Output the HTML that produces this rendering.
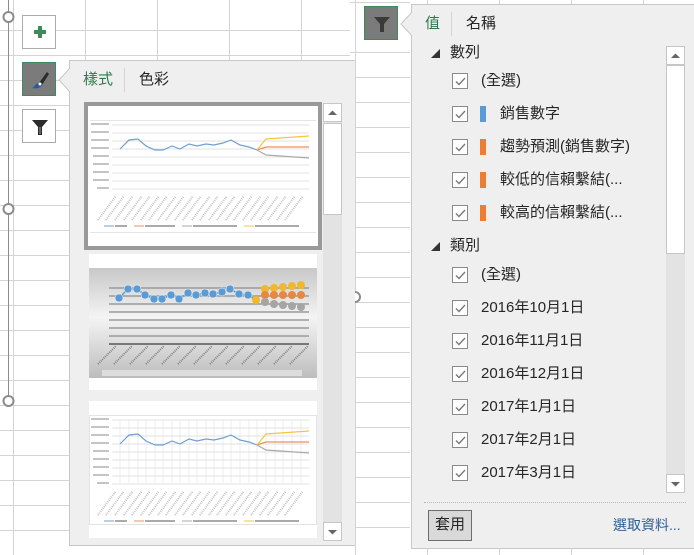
<!DOCTYPE html>
<html><head><meta charset="utf-8"><style>
*{margin:0;padding:0;box-sizing:border-box}
body{width:694px;height:555px;position:relative;overflow:hidden;background:#fff;font-family:"Liberation Sans","Noto Sans CJK TC",sans-serif;color:#262626}
.a{position:absolute}
.btn{position:absolute;width:34px;height:34px;border:1px solid #ababab;background:#fff}
.t{position:absolute;font-size:15px;line-height:16px;white-space:nowrap}
.cb{position:absolute;width:16px;height:16px;border:1px solid #8a8a8a;background:#fdfdfd}
.cb svg{position:absolute;left:2px;top:3px}
.bar{position:absolute;width:6px;height:16px}
</style></head><body>
<svg class="a" style="left:0;top:0" width="694" height="555">
 <g stroke="#d4d4d4" stroke-width="1">
  <line x1="13.5" y1="0" x2="13.5" y2="555"/><line x1="85.5" y1="0" x2="85.5" y2="60"/><line x1="157.5" y1="0" x2="157.5" y2="60"/><line x1="229.5" y1="0" x2="229.5" y2="60"/><line x1="301.5" y1="0" x2="301.5" y2="60"/>
  <line x1="0" y1="30.5" x2="350" y2="30.5"/><line x1="0" y1="55.5" x2="350" y2="55.5"/>
  <line x1="0" y1="80.5" x2="70" y2="80.5"/><line x1="0" y1="105.5" x2="70" y2="105.5"/><line x1="0" y1="130.5" x2="70" y2="130.5"/><line x1="0" y1="155.5" x2="70" y2="155.5"/><line x1="0" y1="180.5" x2="70" y2="180.5"/><line x1="0" y1="205.5" x2="70" y2="205.5"/><line x1="0" y1="230.5" x2="70" y2="230.5"/><line x1="0" y1="255.5" x2="70" y2="255.5"/><line x1="0" y1="280.5" x2="70" y2="280.5"/><line x1="0" y1="305.5" x2="70" y2="305.5"/><line x1="0" y1="330.5" x2="70" y2="330.5"/><line x1="0" y1="355.5" x2="70" y2="355.5"/><line x1="0" y1="380.5" x2="70" y2="380.5"/><line x1="0" y1="405.5" x2="70" y2="405.5"/><line x1="0" y1="430.5" x2="70" y2="430.5"/><line x1="0" y1="455.5" x2="70" y2="455.5"/><line x1="0" y1="480.5" x2="70" y2="480.5"/><line x1="0" y1="505.5" x2="70" y2="505.5"/><line x1="0" y1="530.5" x2="70" y2="530.5"/>
  <line x1="355.5" y1="0" x2="355.5" y2="555"/><line x1="427.5" y1="0" x2="427.5" y2="5"/><line x1="499.5" y1="0" x2="499.5" y2="5"/><line x1="571.5" y1="0" x2="571.5" y2="5"/><line x1="643.5" y1="0" x2="643.5" y2="5"/>
  <line x1="427.5" y1="548" x2="427.5" y2="555"/><line x1="499.5" y1="548" x2="499.5" y2="555"/><line x1="571.5" y1="548" x2="571.5" y2="555"/><line x1="643.5" y1="548" x2="643.5" y2="555"/>
  <line x1="350" y1="2.5" x2="410" y2="2.5"/><line x1="350" y1="52.5" x2="410" y2="52.5"/><line x1="350" y1="77.5" x2="410" y2="77.5"/><line x1="350" y1="102.5" x2="410" y2="102.5"/><line x1="350" y1="127.5" x2="410" y2="127.5"/><line x1="350" y1="152.5" x2="410" y2="152.5"/><line x1="350" y1="177.5" x2="410" y2="177.5"/><line x1="350" y1="202.5" x2="410" y2="202.5"/><line x1="350" y1="227.5" x2="410" y2="227.5"/><line x1="350" y1="252.5" x2="410" y2="252.5"/><line x1="350" y1="277.5" x2="410" y2="277.5"/><line x1="350" y1="302.5" x2="410" y2="302.5"/><line x1="350" y1="327.5" x2="410" y2="327.5"/><line x1="350" y1="352.5" x2="410" y2="352.5"/><line x1="350" y1="377.5" x2="410" y2="377.5"/><line x1="350" y1="402.5" x2="410" y2="402.5"/><line x1="350" y1="427.5" x2="410" y2="427.5"/><line x1="350" y1="452.5" x2="410" y2="452.5"/><line x1="350" y1="477.5" x2="410" y2="477.5"/><line x1="350" y1="502.5" x2="410" y2="502.5"/><line x1="350" y1="527.5" x2="410" y2="527.5"/>
 </g>
 <line x1="8.5" y1="0" x2="8.5" y2="401" stroke="#8c8c8c"/>
 <g fill="#fff" stroke="#8c8c8c" stroke-width="2"><circle cx="8.5" cy="17" r="5"/><circle cx="8.5" cy="209" r="5"/><circle cx="8.5" cy="401" r="5"/><circle cx="355" cy="297" r="5"/></g>
</svg>

<div class="btn" style="left:22px;top:15px"><svg width="34" height="34"><path d="M11 16h12M17 10v12" stroke="#3f8a5a" stroke-width="4"/></svg></div>
<div class="btn" style="left:22px;top:62px;background:#7b7b7b;border-color:#3f8a5a"><svg width="34" height="34"><path d="M24 9 L16 20 L19 22 L26 11Z" fill="#2b2b2b"/><path d="M15 20 C12 21 12 24 9 25 C13 26 18 25 19 22Z" fill="#2a5aa0"/><circle cx="17" cy="21" r="1.5" fill="#fff"/></svg></div>
<div class="btn" style="left:22px;top:109px"><svg width="34" height="34"><path d="M9 10 H25 L19 17 V25 H15 V17 Z" fill="#2b2b2b"/><path d="M16 17 V24 H18 V17" fill="#666"/></svg></div>

<div class="a" style="left:69px;top:60px;width:286px;height:486px;background:#efefef;border:1px solid #c8c8c8;border-right:none"></div>
<svg class="a" style="left:58px;top:68px" width="13" height="24"><path d="M12 0 L1 12 L12 24" fill="#efefef" stroke="#c8c8c8"/></svg>
<div class="t" style="left:83px;top:72px;color:#2f7a4a">樣式</div>
<div class="a" style="left:124px;top:68px;width:1px;height:24px;background:#d4d4d4"></div>
<div class="t" style="left:139px;top:72px">色彩</div>

<svg class="a" style="left:84px;top:102px" width="240" height="440">
 <defs>
  <linearGradient id="g" x1="0" x2="0" y1="0" y2="1"><stop offset="0" stop-color="#c8c8c8"/><stop offset=".45" stop-color="#f4f4f4"/><stop offset="1" stop-color="#bdbdbd"/></linearGradient>
  <g id="ch">
   <g stroke="#e2e2e2"><line x1="28" y1="23" x2="225" y2="23"/><line x1="28" y1="31" x2="225" y2="31"/><line x1="28" y1="39" x2="225" y2="39"/><line x1="28" y1="47" x2="225" y2="47"/><line x1="28" y1="55" x2="225" y2="55"/><line x1="28" y1="63" x2="225" y2="63"/><line x1="28" y1="71" x2="225" y2="71"/><line x1="28" y1="79" x2="225" y2="79"/><line x1="28" y1="87" x2="225" y2="87"/></g>
   <g fill="#c4c4c4"><rect x="7" y="21" width="18" height="2"/><rect x="7" y="29" width="18" height="2"/><rect x="7" y="37" width="18" height="2"/><rect x="7" y="45" width="18" height="2"/><rect x="9" y="53" width="16" height="2"/><rect x="9" y="61" width="16" height="2"/><rect x="9" y="69" width="16" height="2"/><rect x="9" y="77" width="16" height="2"/><rect x="13" y="85" width="12" height="2"/></g>
   <polyline fill="none" stroke="#6f9fd3" stroke-width="1.2" points="36,47 45,38 54,37 62,44 71,48 79,48 88,44 96,47 105,42 113,44 122,42 130,43 139,41 147,38 156,43 165,45 173,48"/>
   <polyline fill="none" stroke="#e9905a" stroke-width="1.2" points="173,48 182,45 225,45"/>
   <polyline fill="none" stroke="#f5c542" stroke-width="1.2" points="173,48 182,37 225,34"/>
   <polyline fill="none" stroke="#aaa" stroke-width="1.2" points="173,48 182,53 225,56"/>
   <g stroke="#c4c4c4" stroke-width="2" stroke-dasharray="1 1">
    <line x1="14" y1="118" x2="32" y2="94"/><line x1="22" y1="118" x2="40" y2="94"/><line x1="31" y1="118" x2="49" y2="94"/><line x1="40" y1="118" x2="58" y2="94"/><line x1="48" y1="118" x2="66" y2="94"/><line x1="57" y1="118" x2="75" y2="94"/><line x1="65" y1="118" x2="83" y2="94"/><line x1="74" y1="118" x2="92" y2="94"/><line x1="82" y1="118" x2="100" y2="94"/><line x1="91" y1="118" x2="109" y2="94"/><line x1="99" y1="118" x2="117" y2="94"/><line x1="108" y1="118" x2="126" y2="94"/><line x1="116" y1="118" x2="134" y2="94"/><line x1="125" y1="118" x2="143" y2="94"/><line x1="133" y1="118" x2="151" y2="94"/><line x1="142" y1="118" x2="160" y2="94"/><line x1="150" y1="118" x2="168" y2="94"/><line x1="159" y1="118" x2="177" y2="94"/><line x1="167" y1="118" x2="185" y2="94"/><line x1="176" y1="118" x2="194" y2="94"/><line x1="184" y1="118" x2="202" y2="94"/><line x1="193" y1="118" x2="211" y2="94"/><line x1="201" y1="118" x2="219" y2="94"/>
   </g>
   <line x1="20" y1="124" x2="30" y2="124" stroke="#6f9fd3"/><rect x="31" y="123" width="12" height="2" fill="#aaa"/>
   <line x1="50" y1="124" x2="60" y2="124" stroke="#e9905a"/><rect x="61" y="123" width="30" height="2" fill="#aaa"/>
   <line x1="98" y1="124" x2="108" y2="124" stroke="#aaa"/><rect x="109" y="123" width="44" height="2" fill="#aaa"/>
   <line x1="160" y1="124" x2="170" y2="124" stroke="#f5c542"/><rect x="171" y="123" width="44" height="2" fill="#aaa"/>
  </g>
 </defs>
 <rect x="2" y="2" width="234" height="144" fill="#fff" stroke="#999" stroke-width="4"/>
 <line x1="6" y1="18.5" x2="232" y2="18.5" stroke="#e5e5e5"/>
 <line x1="6" y1="130.5" x2="232" y2="130.5" stroke="#e5e5e5"/>
 <use href="#ch" x="0" y="0"/>
 <rect x="5" y="152" width="228" height="136" fill="#fff"/>
 <rect x="5" y="166" width="228" height="110" fill="url(#g)"/>
 <g stroke="#9a9a9a" stroke-width="1.5"><line x1="25" y1="186" x2="225" y2="186"/><line x1="25" y1="194" x2="225" y2="194"/><line x1="25" y1="202" x2="225" y2="202"/><line x1="25" y1="210" x2="225" y2="210"/><line x1="25" y1="218" x2="225" y2="218"/><line x1="25" y1="226" x2="225" y2="226"/><line x1="25" y1="234" x2="225" y2="234"/></g>
 <line x1="25" y1="242" x2="225" y2="242" stroke="#777" stroke-width="2"/>
 <polyline fill="none" stroke="#5b9bd5" stroke-width="1.5" points="35,196 44,187 53,187 61,193 70,197 78,197 87,193 95,197 104,191 112,193 121,191 129,192 138,190 146,187 155,192 164,193 172,198"/>
 <g fill="#5b9bd5" stroke="#fff" stroke-width=".5"><circle cx="35" cy="196" r="4"/><circle cx="44" cy="187" r="4"/><circle cx="53" cy="187" r="4"/><circle cx="61" cy="193" r="4"/><circle cx="70" cy="197" r="4"/><circle cx="78" cy="197" r="4"/><circle cx="87" cy="193" r="4"/><circle cx="95" cy="197" r="4"/><circle cx="104" cy="191" r="4"/><circle cx="112" cy="193" r="4"/><circle cx="121" cy="191" r="4"/><circle cx="129" cy="192" r="4"/><circle cx="138" cy="190" r="4"/><circle cx="146" cy="187" r="4"/><circle cx="155" cy="192" r="4"/><circle cx="164" cy="193" r="4"/></g>
 <g fill="#f2b82c"><circle cx="172" cy="198" r="4"/><circle cx="181" cy="187" r="4"/><circle cx="190" cy="186" r="4"/><circle cx="199" cy="185" r="4"/><circle cx="208" cy="184" r="4"/><circle cx="217" cy="183" r="4"/></g>
 <g fill="#e6883f"><circle cx="181" cy="193" r="4"/><circle cx="190" cy="193" r="4"/><circle cx="199" cy="193" r="4"/><circle cx="208" cy="193" r="4"/><circle cx="217" cy="193" r="4"/></g>
 <g fill="#a5a5a5"><circle cx="181" cy="200" r="4"/><circle cx="190" cy="202" r="4"/><circle cx="199" cy="203" r="4"/><circle cx="208" cy="204" r="4"/><circle cx="217" cy="205" r="4"/></g>
 <g stroke="#888" stroke-width="2" stroke-dasharray="1 1"><line x1="14" y1="262" x2="32" y2="244"/><line x1="30" y1="262" x2="48" y2="244"/><line x1="46" y1="262" x2="64" y2="244"/><line x1="62" y1="262" x2="80" y2="244"/><line x1="78" y1="262" x2="96" y2="244"/><line x1="94" y1="262" x2="112" y2="244"/><line x1="110" y1="262" x2="128" y2="244"/><line x1="126" y1="262" x2="144" y2="244"/><line x1="142" y1="262" x2="160" y2="244"/><line x1="158" y1="262" x2="176" y2="244"/><line x1="174" y1="262" x2="192" y2="244"/><line x1="190" y1="262" x2="208" y2="244"/><line x1="206" y1="262" x2="224" y2="244"/></g>
 <rect x="18" y="268" width="200" height="6" fill="#ddd"/>
 <rect x="5" y="299" width="228" height="137" fill="#fff"/>
 <rect x="5.5" y="313.5" width="227" height="109" fill="#fff" stroke="#e3e3e3"/>
 <g stroke="#ececec"><line x1="36" y1="318" x2="36" y2="381"/><line x1="45" y1="318" x2="45" y2="381"/><line x1="54" y1="318" x2="54" y2="381"/><line x1="62" y1="318" x2="62" y2="381"/><line x1="71" y1="318" x2="71" y2="381"/><line x1="79" y1="318" x2="79" y2="381"/><line x1="88" y1="318" x2="88" y2="381"/><line x1="96" y1="318" x2="96" y2="381"/><line x1="105" y1="318" x2="105" y2="381"/><line x1="113" y1="318" x2="113" y2="381"/><line x1="122" y1="318" x2="122" y2="381"/><line x1="130" y1="318" x2="130" y2="381"/><line x1="139" y1="318" x2="139" y2="381"/><line x1="147" y1="318" x2="147" y2="381"/><line x1="156" y1="318" x2="156" y2="381"/><line x1="165" y1="318" x2="165" y2="381"/><line x1="173" y1="318" x2="173" y2="381"/><line x1="182" y1="318" x2="182" y2="381"/><line x1="191" y1="318" x2="191" y2="381"/><line x1="199" y1="318" x2="199" y2="381"/><line x1="208" y1="318" x2="208" y2="381"/><line x1="217" y1="318" x2="217" y2="381"/></g>
 <use href="#ch" x="0" y="295"/>
</svg>
<div class="a" style="left:323px;top:103px;width:19px;height:438px;background:#e3e3e3"></div>
<div class="a" style="left:323px;top:103px;width:19px;height:19px;background:#fff;border:1px solid #c6c6c6"><svg width="17" height="17"><path d="M4 11 L8.5 6.5 L13 11Z" fill="#666"/></svg></div>
<div class="a" style="left:323px;top:123px;width:19px;height:92px;background:#fff;border:1px solid #c6c6c6"></div>
<div class="a" style="left:323px;top:522px;width:19px;height:19px;background:#fff;border:1px solid #c6c6c6"><svg width="17" height="17"><path d="M4 7 L8.5 11.5 L13 7Z" fill="#666"/></svg></div>

<div class="btn" style="left:364px;top:6px;background:#7b7b7b;border-color:#3f8a5a"><svg width="34" height="34"><path d="M9 10 H25 L19 17 V25 H15 V17 Z" fill="#3a3a3a"/></svg></div>

<div class="a" style="left:411px;top:4px;width:290px;height:545px;background:#efefef;border:1px solid #c8c8c8"></div>
<svg class="a" style="left:400px;top:12px" width="13" height="24"><path d="M12 0 L1 12 L12 24" fill="#efefef" stroke="#c8c8c8"/></svg>
<div class="t" style="left:425px;top:16px;color:#2f7a4a">值</div>
<div class="a" style="left:451px;top:12px;width:1px;height:24px;background:#d4d4d4"></div>
<div class="t" style="left:466px;top:16px">名稱</div>

<svg class="a" style="left:430px;top:48px" width="12" height="12"><path d="M1 10 H10 V1Z" fill="#333"/></svg>
<div class="t" style="left:450px;top:45px">數列</div>
<svg class="a" style="left:430px;top:241px" width="12" height="12"><path d="M1 10 H10 V1Z" fill="#333"/></svg>
<div class="t" style="left:450px;top:238px">類別</div>

<div class="cb" style="left:452px;top:73px"><svg width="11" height="9"><path d="M1 4.5 L4 7.5 L10 1" fill="none" stroke="#777" stroke-width="1.3"/></svg></div><div class="t" style="left:481px;top:73px">(全選)</div>
<div class="cb" style="left:452px;top:106px"><svg width="11" height="9"><path d="M1 4.5 L4 7.5 L10 1" fill="none" stroke="#777" stroke-width="1.3"/></svg></div><div class="bar" style="left:480px;top:106px;background:#5b9bd5"></div><div class="t" style="left:500px;top:106px">銷售數字</div>
<div class="cb" style="left:452px;top:139px"><svg width="11" height="9"><path d="M1 4.5 L4 7.5 L10 1" fill="none" stroke="#777" stroke-width="1.3"/></svg></div><div class="bar" style="left:480px;top:139px;background:#ed7d31"></div><div class="t" style="left:500px;top:139px">趨勢預測(銷售數字)</div>
<div class="cb" style="left:452px;top:172px"><svg width="11" height="9"><path d="M1 4.5 L4 7.5 L10 1" fill="none" stroke="#777" stroke-width="1.3"/></svg></div><div class="bar" style="left:480px;top:172px;background:#ed7d31"></div><div class="t" style="left:500px;top:172px">較低的信賴繫結(...</div>
<div class="cb" style="left:452px;top:205px"><svg width="11" height="9"><path d="M1 4.5 L4 7.5 L10 1" fill="none" stroke="#777" stroke-width="1.3"/></svg></div><div class="bar" style="left:480px;top:205px;background:#ed7d31"></div><div class="t" style="left:500px;top:205px">較高的信賴繫結(...</div>

<div class="cb" style="left:452px;top:267px"><svg width="11" height="9"><path d="M1 4.5 L4 7.5 L10 1" fill="none" stroke="#777" stroke-width="1.3"/></svg></div><div class="t" style="left:481px;top:267px">(全選)</div>
<div class="cb" style="left:452px;top:300px"><svg width="11" height="9"><path d="M1 4.5 L4 7.5 L10 1" fill="none" stroke="#777" stroke-width="1.3"/></svg></div><div class="t" style="left:481px;top:300px">2016年10月1日</div>
<div class="cb" style="left:452px;top:333px"><svg width="11" height="9"><path d="M1 4.5 L4 7.5 L10 1" fill="none" stroke="#777" stroke-width="1.3"/></svg></div><div class="t" style="left:481px;top:333px">2016年11月1日</div>
<div class="cb" style="left:452px;top:366px"><svg width="11" height="9"><path d="M1 4.5 L4 7.5 L10 1" fill="none" stroke="#777" stroke-width="1.3"/></svg></div><div class="t" style="left:481px;top:366px">2016年12月1日</div>
<div class="cb" style="left:452px;top:399px"><svg width="11" height="9"><path d="M1 4.5 L4 7.5 L10 1" fill="none" stroke="#777" stroke-width="1.3"/></svg></div><div class="t" style="left:481px;top:399px">2017年1月1日</div>
<div class="cb" style="left:452px;top:432px"><svg width="11" height="9"><path d="M1 4.5 L4 7.5 L10 1" fill="none" stroke="#777" stroke-width="1.3"/></svg></div><div class="t" style="left:481px;top:432px">2017年2月1日</div>
<div class="cb" style="left:452px;top:465px"><svg width="11" height="9"><path d="M1 4.5 L4 7.5 L10 1" fill="none" stroke="#777" stroke-width="1.3"/></svg></div><div class="t" style="left:481px;top:465px">2017年3月1日</div>

<div class="a" style="left:666px;top:46px;width:19px;height:447px;background:#e3e3e3"></div>
<div class="a" style="left:666px;top:46px;width:19px;height:19px;background:#fff;border:1px solid #c6c6c6"><svg width="17" height="17"><path d="M4 11 L8.5 6.5 L13 11Z" fill="#666"/></svg></div>
<div class="a" style="left:666px;top:65px;width:19px;height:189px;background:#fff;border:1px solid #c6c6c6"></div>
<div class="a" style="left:666px;top:474px;width:19px;height:19px;background:#fff;border:1px solid #c6c6c6"><svg width="17" height="17"><path d="M4 7 L8.5 11.5 L13 7Z" fill="#666"/></svg></div>

<div class="a" style="left:424px;top:502px;width:262px;height:0;border-top:1px dotted #bbb"></div>
<div class="a" style="left:428px;top:510px;width:44px;height:31px;background:#d9d9d9;border:1px solid #6e6e6e"></div>
<div class="t" style="left:435px;top:517px">套用</div>
<div class="t" style="left:613px;top:517px;color:#2e5f96;font-size:14px">選取資料...</div>
</body></html>
